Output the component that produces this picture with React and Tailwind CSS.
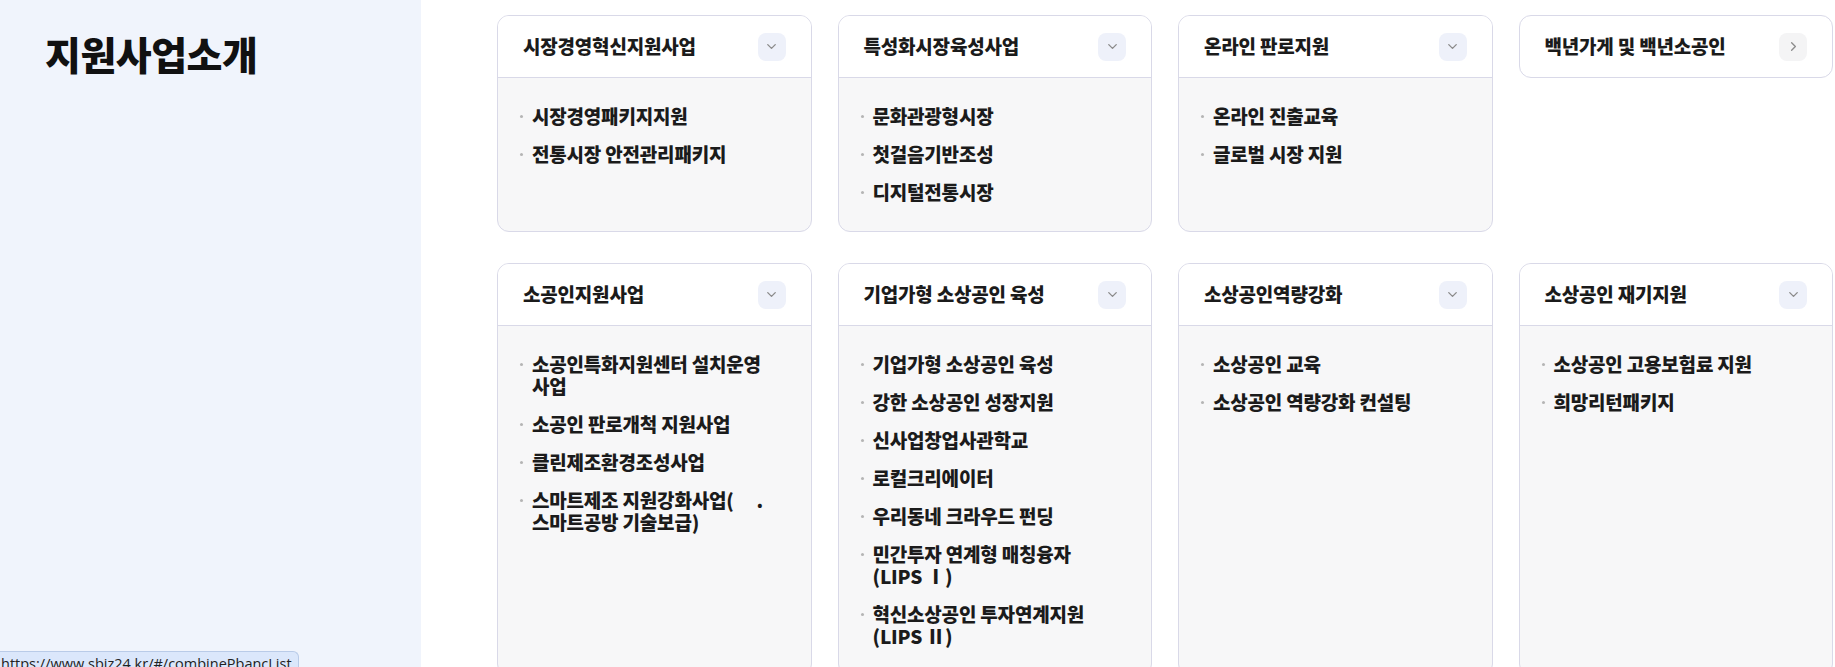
import { ChevronDown, ChevronRight } from "lucide-react";

const rowOne = [
  { title: "시장경영혁신지원사업", items: [["시장경영패키지지원"], ["전통시장 안전관리패키지"]] },
  { title: "특성화시장육성사업", items: [["문화관광형시장"], ["첫걸음기반조성"], ["디지털전통시장"]] },
  { title: "온라인 판로지원", items: [["온라인 진출교육"], ["글로벌 시장 지원"]] },
  { title: "백년가게 및 백년소공인", items: null },
];

const rowTwo = [
  {
    title: "소공인지원사업",
    items: [
      ["소공인특화지원센터 설치운영", "사업"],
      ["소공인 판로개척 지원사업"],
      ["클린제조환경조성사업"],
      ["스마트제조 지원강화사업(\u3000 .", "스마트공방 기술보급)"],
    ],
  },
  {
    title: "기업가형 소상공인 육성",
    items: [
      ["기업가형 소상공인 육성"],
      ["강한 소상공인 성장지원"],
      ["신사업창업사관학교"],
      ["로컬크리에이터"],
      ["우리동네 크라우드 펀딩"],
      ["민간투자 연계형 매칭융자", "(LIPS Ⅰ)"],
      ["혁신소상공인 투자연계지원", "(LIPS Ⅱ)"],
    ],
  },
  { title: "소상공인역량강화", items: [["소상공인 교육"], ["소상공인 역량강화 컨설팅"]] },
  { title: "소상공인 재기지원", items: [["소상공인 고용보험료 지원"], ["희망리턴패키지"]] },
];

function Card({ title, items }) {
  if (!items) {
    return (
      <div className="self-start rounded-xl border border-[#d9d9e8] bg-white">
        <div className="flex h-[61px] items-center justify-between pl-[25px] pr-[25px]">
          <span className="whitespace-nowrap text-[19px] font-extrabold tracking-[-0.2px] text-[#1b1b1b]">{title}</span>
          <span className="flex h-[28px] w-[28px] items-center justify-center rounded-lg bg-[#f4f4f5]">
            <ChevronRight size={15} strokeWidth={2.2} className="text-[#8d8d8d]" />
          </span>
        </div>
      </div>
    );
  }
  return (
    <div className="overflow-hidden rounded-xl border border-[#d9d9e8] bg-[#f7f7f8]">
      <div className="flex h-[62px] items-center justify-between border-b border-[#d9d9e8] bg-white pl-[25px] pr-[25px]">
        <span className="whitespace-nowrap text-[19px] font-extrabold tracking-[-0.2px] text-[#1b1b1b]">{title}</span>
        <span className="flex h-[28px] w-[28px] items-center justify-center rounded-lg bg-[#eef1fa]">
          <ChevronDown size={15} strokeWidth={2.2} className="text-[#8d8d8d]" />
        </span>
      </div>
      <ul className="flex flex-col gap-[16px] pb-[28px] pl-[22px] pr-[20px] pt-[27px]">
        {items.map((lines, i) => (
          <li key={i} className="flex items-start gap-[9px]">
            <span className="mt-[10px] h-[3px] w-[3px] shrink-0 rounded-full bg-[#b5b5b5]" />
            <span className="text-[19px] font-extrabold leading-[22px] tracking-[-0.2px] text-[#1b1b1b]">
              {lines.map((l, j) => (
                <span key={j} className="block whitespace-nowrap">
                  {l}
                </span>
              ))}
            </span>
          </li>
        ))}
      </ul>
    </div>
  );
}

export default function App() {
  return (
    <div
      className="relative flex h-[667px] w-full overflow-hidden bg-white"
      style={{ fontFamily: '"Noto Sans CJK KR", "Noto Sans", sans-serif' }}
    >
      <aside className="w-[421px] shrink-0 bg-[#f0f4fc] pl-[45px] pt-[26px]">
        <h1 className="text-[39px] font-extrabold leading-[54px] tracking-[-0.5px] text-[#111]">지원사업소개</h1>
      </aside>

      <main className="flex-1 pl-[76px] pr-[2px] pt-[15px]">
        <div className="grid grid-cols-4 gap-x-[26px] gap-y-[31px]">
          {rowOne.map((c) => (
            <Card key={c.title} {...c} />
          ))}
          {rowTwo.map((c) => (
            <Card key={c.title} {...c} />
          ))}
        </div>
      </main>

      <div className="absolute bottom-0 left-0 h-[16px] overflow-hidden rounded-tr-md border border-b-0 border-l-0 border-[#b9cbe8] bg-[#dbe7fb] pl-[1px] pr-[6px] pt-[3px]">
        <span className="block text-[14.5px] leading-[18px] text-[#222]" style={{ fontFamily: '"Open Sans", sans-serif' }}>
          https://www.sbiz24.kr/#/combinePbancList
        </span>
      </div>
    </div>
  );
}
